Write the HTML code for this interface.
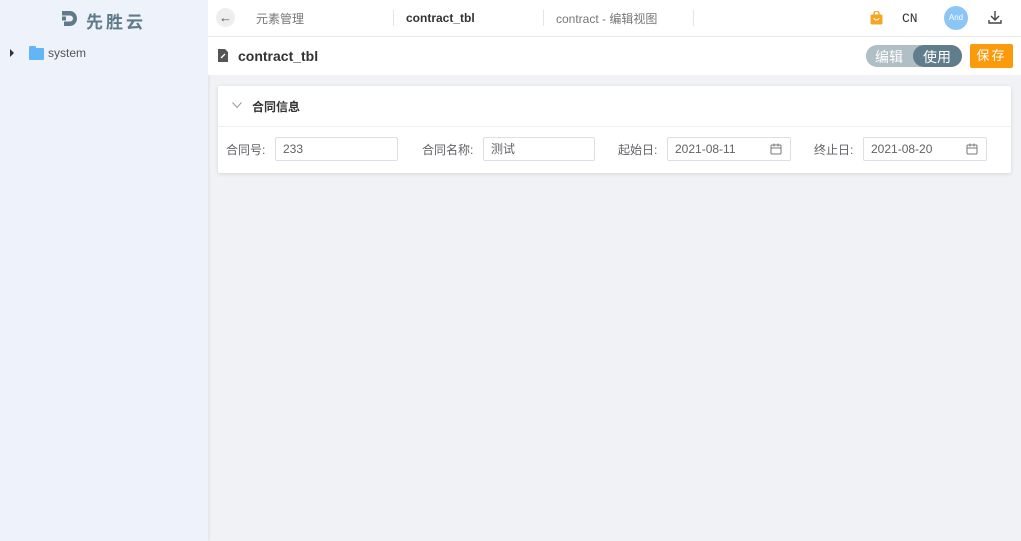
<!DOCTYPE html><html><head><meta charset="utf-8"><style>
*{box-sizing:border-box;margin:0;padding:0}
body{width:1021px;height:541px;overflow:hidden;background:#f0f2f5;font-family:"Liberation Sans","Noto Sans CJK SC",sans-serif;position:relative;font-size:12px;color:#606266}
.side{position:absolute;left:0;top:0;width:208px;height:541px;background:#eef2fa;box-shadow:1px 0 3px rgba(0,0,0,.08)}
.abs{position:absolute}
.top{position:absolute;left:208px;top:0;right:0;height:37px;background:#fff;border-bottom:1px solid #e8e8e8}
.bar{position:absolute;left:208px;top:37px;right:0;height:38px;background:#fff}
.card{position:absolute;left:218px;top:86px;width:793px;height:87px;background:#fff;box-shadow:0 1px 4px rgba(0,0,0,.12);border-radius:2px}
.inp{position:absolute;height:24px;border:1px solid #dcdfe6;border-radius:2px;top:51px;padding-left:7px;line-height:22px;font-size:12px;color:#606266}
.lbl{position:absolute;top:55px;font-size:12px;color:#606266}
.sep{position:absolute;top:10px;width:1px;height:16px;background:#e4e4e4}
.cal{position:absolute;right:8px;top:5px}
</style></head><body>
<div class="side">
<svg class="abs" style="left:62px;top:11px" width="16" height="15" viewBox="0 0 16 15"><path d="M0 0h8a7 7.5 0 0 1 0 15H2v-4.5h6a3 3 0 0 0 0-6H0z" fill="#5f7b8a"/><rect x="0" y="5.5" width="4" height="4" fill="#5f7b8a"/></svg>
<div class="abs" style="left:86px;top:8px;font-size:17px;font-weight:bold;color:#5f7b8a;letter-spacing:3px">先胜云</div>
<div class="abs" style="left:10px;top:49px;width:0;height:0;border-left:4px solid #333;border-top:4px solid transparent;border-bottom:4px solid transparent"></div>
<div class="abs" style="left:29px;top:48px;width:15px;height:12px;background:#62b6f7;border-radius:1px"></div>
<div class="abs" style="left:29px;top:46px;width:7px;height:4px;background:#62b6f7;border-radius:1px"></div>
<div class="abs" style="left:48px;top:46px;color:#555">system</div>
</div>
<div class="top">
<div class="abs" style="left:8px;top:8px;width:19px;height:19px;border-radius:50%;background:#eee;text-align:center;line-height:19px;font-size:13px;color:#555">←</div>
<div class="abs" style="left:48px;top:10px;color:#777;font-size:12px">元素管理</div>
<div class="sep" style="left:185px"></div>
<div class="abs" style="left:198px;top:11px;color:#333;font-weight:bold">contract_tbl</div>
<div class="sep" style="left:335px"></div>
<div class="abs" style="left:348px;top:10px;color:#777">contract - 编辑视图</div>
<div class="sep" style="left:485px"></div>
<svg class="abs" style="left:662px;top:11px" width="13" height="14" viewBox="0 0 13 14"><path d="M4 4V2.5a2.5 2.5 0 0 1 5 0V4" fill="none" stroke="#f5a623" stroke-width="1.4"/><rect x="0.5" y="3.5" width="12" height="10" rx="1.5" fill="#f5a623"/><path d="M4 7a2.5 2 0 0 0 5 0" fill="none" stroke="#fff" stroke-width="1"/></svg>
<div class="abs" style="left:694px;top:11px;color:#333;font-family:'Liberation Mono',monospace;font-size:13px">CN</div>
<div class="abs" style="left:736px;top:6px;width:24px;height:24px;border-radius:50%;background:#8cc6f7;color:#fff;font-size:8px;text-align:center;line-height:24px">And</div>
<svg class="abs" style="left:779px;top:9px" width="16" height="16" viewBox="0 0 16 16"><path d="M8 2v9M4 7l4 4 4-4M2 11v3h12v-3" fill="none" stroke="#444" stroke-width="1.4"/></svg>
</div>
<div class="bar">
<svg class="abs" style="left:10px;top:12px" width="10" height="13" viewBox="0 0 10 13"><path d="M0 0h7l3 3v10H0z" fill="#555"/><path d="M3 9l4-4" stroke="#fff" stroke-width="1.3"/></svg>
<div class="abs" style="left:30px;top:11px;font-size:14px;font-weight:bold;color:#333">contract_tbl</div>
<div class="abs" style="left:658px;top:8px;width:96px;height:22px;border-radius:11px;background:#b0bec5"></div>
<div class="abs" style="left:705px;top:8px;width:49px;height:22px;border-radius:11px;background:#607d8b"></div>
<div class="abs" style="left:667px;top:10px;color:#fff;font-size:14px">编辑</div>
<div class="abs" style="left:715px;top:10px;color:#fff;font-size:14px">使用</div>
<div class="abs" style="left:762px;top:7px;width:43px;height:24px;background:#fb9b0c;border-radius:2px;color:#fff;font-size:13px;text-align:center;line-height:24px;letter-spacing:2px">保存</div>
</div>
<div class="card">
<svg class="abs" style="left:14px;top:16px" width="10" height="7" viewBox="0 0 10 7"><path d="M0.5 0.5l4.5 5 4.5-5" fill="none" stroke="#999" stroke-width="1"/></svg>
<div class="abs" style="left:34px;top:12px;color:#333;font-weight:bold;font-size:12px">合同信息</div>
<div class="abs" style="left:0;top:40px;width:793px;height:1px;background:#eceff3"></div>
<div class="lbl" style="left:8px">合同号:</div>
<div class="inp" style="left:57px;width:123px">233</div>
<div class="lbl" style="left:204px">合同名称:</div>
<div class="inp" style="left:265px;width:112px">测试</div>
<div class="lbl" style="left:400px">起始日:</div>
<div class="inp" style="left:449px;width:124px">2021-08-11<svg class="cal" width="12" height="12" viewBox="0 0 12 12"><rect x="1" y="2" width="10" height="9" rx="1" fill="none" stroke="#777"/><path d="M1 5h10M4 0.5v3M8 0.5v3" stroke="#777"/></svg></div>
<div class="lbl" style="left:596px">终止日:</div>
<div class="inp" style="left:645px;width:124px">2021-08-20<svg class="cal" width="12" height="12" viewBox="0 0 12 12"><rect x="1" y="2" width="10" height="9" rx="1" fill="none" stroke="#777"/><path d="M1 5h10M4 0.5v3M8 0.5v3" stroke="#777"/></svg></div>
</div>
</body></html>
